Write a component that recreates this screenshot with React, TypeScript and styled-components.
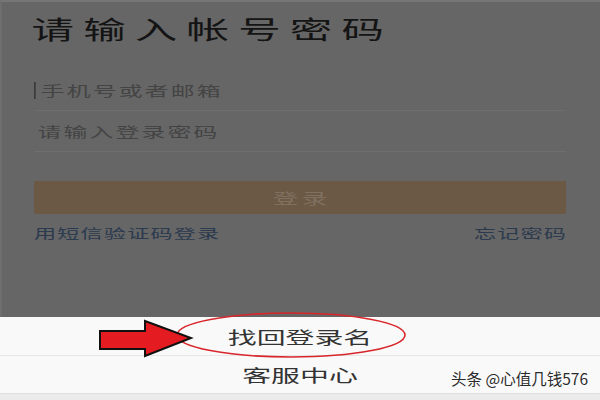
import styled, { createGlobalStyle } from 'styled-components';

const GlobalStyle = createGlobalStyle`
	html, body {
		margin: 0;
		padding: 0;
		background: #666666;
	}
	* {
		box-sizing: border-box;
	}
`;

const FONT = `"Noto Sans CJK SC", "Noto Sans", sans-serif`;
// the source screenshot is stretched sideways, so the phone page is laid out narrow and widened
const STRETCH = 1.7;

const App = () => {
	return (
		<Screen>
			<GlobalStyle />
			<Stage>
				<Form>
					<Title>请输入帐号密码</Title>
					<Field>
						<Caret />
						<Input placeholder="手机号或者邮箱" readOnly />
					</Field>
					<Field>
						<Input placeholder="请输入登录密码" readOnly />
					</Field>
					<LoginButton type="button">登录</LoginButton>
					<LinkRow>
						<TextLink>用短信验证码登录</TextLink>
						<TextLink>忘记密码</TextLink>
					</LinkRow>
				</Form>
				<Sheet>
					<SheetItem>找回登录名</SheetItem>
					<SheetItem>客服中心</SheetItem>
					<SheetFoot />
				</Sheet>
			</Stage>

			<Annotation width="600" height="400" viewBox="0 0 600 400">
				<ellipse cx="291" cy="335" rx="114" ry="22" fill="none" stroke="#d8262b" strokeWidth="1.6" />
				<polygon
					points="100,331 145,331 145,321 191,338 145,356 145,349 100,349"
					fill="#e41b20"
					stroke="#111"
					strokeWidth="2"
				/>
			</Annotation>
			<Watermark>头条 @心值几钱576</Watermark>
		</Screen>
	);
};

const Screen = styled.div`
	position: relative;
	width: 600px;
	height: 400px;
	overflow: hidden;
	background: #666666;
	font-family: ${FONT};
`;

const Stage = styled.div`
	width: ${600 / STRETCH}px;
	height: 400px;
	display: flex;
	flex-direction: column;
	transform: scaleX(${STRETCH});
	transform-origin: 0 0;
`;

const Form = styled.div`
	height: 317px;
	padding: 0 20px 0 19px;
	display: flex;
	flex-direction: column;
	border-top: 2px solid #767676;
	border-left: 1px solid #6f6f6f;
`;

const Title = styled.h1`
	margin: 0 0 0 -1.5px;
	height: 56px;
	line-height: 52px;
	font-size: 25px;
	font-weight: 400;
	letter-spacing: 5.4px;
	color: #141414;
	white-space: nowrap;
`;

const Field = styled.div`
	display: flex;
	align-items: center;
	height: 41px;
	border-bottom: 1px solid #6e6e6e;
	&:first-of-type {
		margin-top: 12px;
	}
`;

const Caret = styled.span`
	width: 1px;
	height: 17px;
	margin-right: 1px;
	background: #3a3a3a;
`;

const Input = styled.input`
	flex: 1;
	min-width: 0;
	border: none;
	outline: none;
	background: transparent;
	padding: 0 0 0 2px;
	height: 100%;
	font-family: ${FONT};
	font-size: 14px;
	letter-spacing: 1.3px;
	color: #3e3e3e;
	&::placeholder {
		color: #444;
	}
`;

const LoginButton = styled.button`
	margin-top: 29px;
	height: 33px;
	border: none;
	border-radius: 1px;
	background: #6b5945;
	color: #7f705f;
	font-family: ${FONT};
	font-size: 15px;
	letter-spacing: 2px;
	padding: 0 0 0 2px;
`;

const LinkRow = styled.div`
	display: flex;
	justify-content: space-between;
	align-items: center;
	margin-top: 8px;
	height: 20px;
`;

const TextLink = styled.span`
	font-size: 13px;
	letter-spacing: 0.7px;
	color: #2b3a4e;
	white-space: nowrap;
	&:last-child {
		margin-right: -0.7px;
	}
`;

const Sheet = styled.div`
	flex: 1;
	display: flex;
	flex-direction: column;
	background: #f9f9f9;
`;

const SheetItem = styled.div`
	height: 38px;
	display: flex;
	align-items: center;
	justify-content: center;
	font-size: 17px;
	color: #333;
	& + & {
		border-top: 1px solid #e6e6e6;
	}
`;

const SheetFoot = styled.div`
	flex: 1;
	background: #ebebeb;
	border-top: 1px solid #e0e0e0;
`;

const Annotation = styled.svg`
	position: absolute;
	left: 0;
	top: 0;
	pointer-events: none;
`;

const Watermark = styled.span`
	position: absolute;
	right: 12px;
	bottom: 11px;
	font-size: 15.5px;
	color: #2a2a2a;
	white-space: nowrap;
	text-shadow: 0 0 2px #fff, 0 0 1px #fff;
`;

export default App;
